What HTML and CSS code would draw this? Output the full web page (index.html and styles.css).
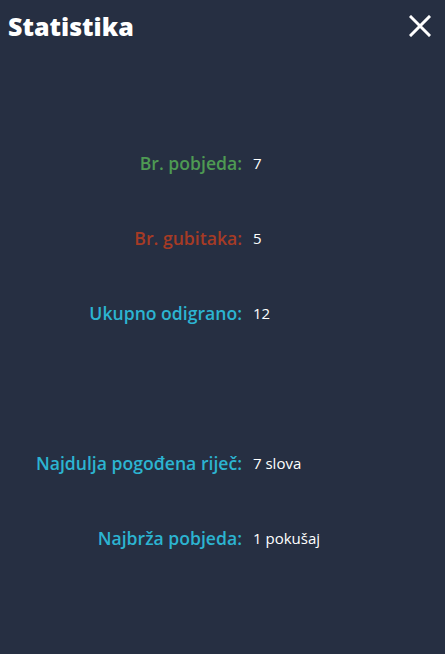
FILE: index.html
```html
<!DOCTYPE html>
<html lang="hr">
<head>
<meta charset="utf-8">
<link rel="stylesheet" href="styles.css">
</head>
<body>
<div class="modal">
  <header class="head">
    <h1 class="title">Statistika</h1>
    <button class="close" aria-label="Zatvori">
      <svg width="22" height="22" viewBox="0 0 22 22"><path d="M2 2 L20 20 M20 2 L2 20" stroke="#fff" stroke-width="3" stroke-linecap="square"/></svg>
    </button>
  </header>
  <div class="stats">
    <div class="row"><span class="label win">Br. pobjeda:</span><span class="value">7</span></div>
    <div class="row"><span class="label loss">Br. gubitaka:</span><span class="value">5</span></div>
    <div class="row"><span class="label info">Ukupno odigrano:</span><span class="value">12</span></div>
    <div class="row spacer"></div>
    <div class="row"><span class="label info">Najdulja pogođena riječ:</span><span class="value">7 slova</span></div>
    <div class="row"><span class="label info">Najbrža pobjeda:</span><span class="value">1 pokušaj</span></div>
  </div>
</div>
</body>
</html>
```
FILE: styles.css
```css
html, body {
  margin: 0;
  padding: 0;
  background: #262f42;
  height: 100%;
}
body {
  font-family: "Open Sans", "Noto Sans", sans-serif;
  color: #fff;
}
.modal {
  padding: 0 8px;
}
.head {
  display: flex;
  justify-content: space-between;
  align-items: center;
  height: 52px;
}
.title {
  margin: 0;
  font-size: 25px;
  font-weight: 800;
  line-height: 1;
}
.close {
  background: none;
  border: 0;
  padding: 0;
  margin-right: 6px;
  display: flex;
}
.stats {
  display: grid;
  grid-template-columns: 245px 1fr;
  margin-top: 100px;
}
.row {
  display: contents;
}
.label, .value {
  height: 75px;
  line-height: 22px;
}
.label {
  text-align: right;
  font-size: 1.1rem;
  font-weight: 600;
  padding-right: 11px;
}
.value {
  font-size: 15px;
}
.spacer::before, .spacer::after {
  content: "";
  height: 75px;
}
.win { color: #4e9a53; }
.loss { color: #a63b25; }
.info { color: #2cb4d1; }
```
